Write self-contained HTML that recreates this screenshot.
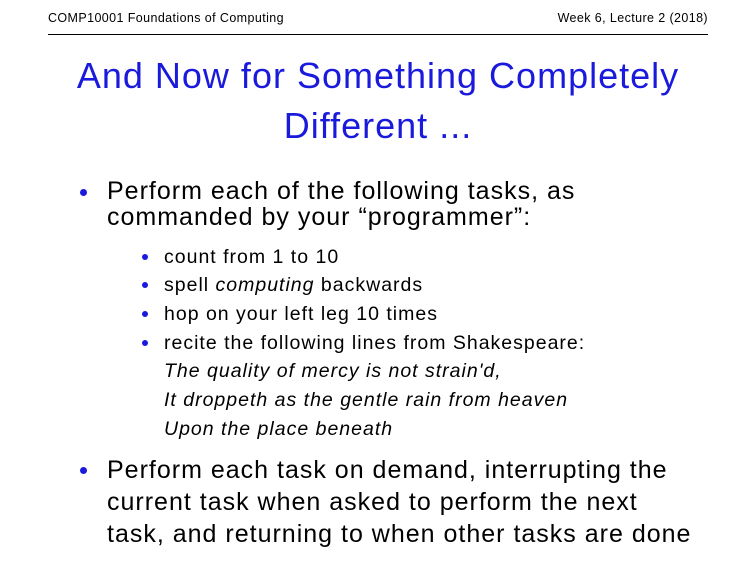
<!DOCTYPE html>
<html><head><meta charset="utf-8"><style>
body{margin:0;width:756px;height:567px;background:#fff;overflow:hidden;position:relative;font-family:"Liberation Sans",sans-serif;color:#000}
div{position:absolute;white-space:nowrap}
.h{font-size:12.5px;letter-spacing:0.4px;top:11px;line-height:14px}
.t{color:#1a1adc;font-size:36px;letter-spacing:1px;line-height:40px;width:756px;text-align:center;left:0}
.b{font-size:25px;letter-spacing:1px;line-height:30px;left:107px}
.s{font-size:19.5px;letter-spacing:1px;line-height:24px;left:164px}
.d{background:#1a1adc;border-radius:50%}
.d1{width:7px;height:7px;left:80px}
.d2{width:6px;height:6px;left:142px}
i{font-style:italic}
</style></head><body>
<div class="h" style="left:48px">COMP10001 Foundations of Computing</div>
<div class="h" style="right:48px">Week 6, Lecture 2 (2018)</div>
<div style="left:48px;top:34px;width:660px;height:1px;background:#000"></div>
<div class="t" style="top:56px">And Now for Something Completely</div>
<div class="t" style="top:106px">Different ...</div>
<div class="d d1" style="top:189px"></div>
<div class="b" style="top:176px">Perform each of the following tasks, as</div>
<div class="b" style="top:202px">commanded by your “programmer”:</div>
<div class="d d2" style="top:254px"></div><div class="s" style="top:245px">count from 1 to 10</div>
<div class="d d2" style="top:282px"></div><div class="s" style="top:273px">spell <i>computing</i> backwards</div>
<div class="d d2" style="top:311px"></div><div class="s" style="top:302px">hop on your left leg 10 times</div>
<div class="d d2" style="top:340px"></div><div class="s" style="top:331px">recite the following lines from Shakespeare:</div>
<div class="s" style="top:359px"><i>The quality of mercy is not strain'd,</i></div>
<div class="s" style="top:388px"><i>It droppeth as the gentle rain from heaven</i></div>
<div class="s" style="top:417px"><i>Upon the place beneath</i></div>
<div class="d d1" style="top:467px"></div>
<div class="b" style="top:455px">Perform each task on demand, interrupting the</div>
<div class="b" style="top:487px">current task when asked to perform the next</div>
<div class="b" style="top:519px">task, and returning to when other tasks are done</div>
</body></html>
